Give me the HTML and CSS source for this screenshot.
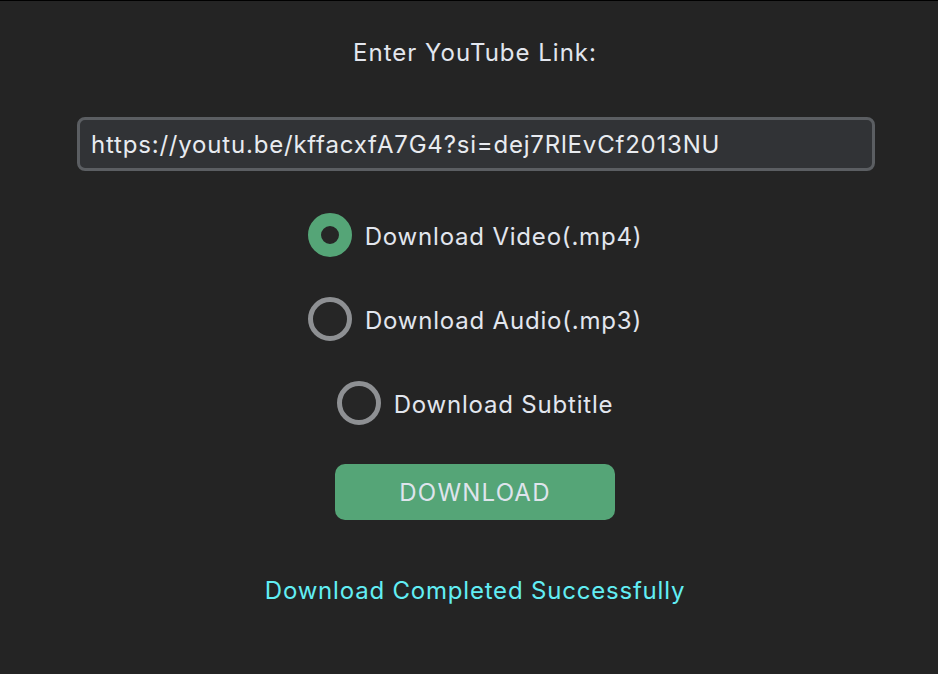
FILE: index.html
```html
<!DOCTYPE html>
<html>
<head>
<meta charset="utf-8">
<link rel="stylesheet" href="styles.css">
</head>
<body>
<main class="app">
  <div class="title">Enter YouTube Link:</div>
  <div class="input">https://youtu.be/kffacxfA7G4?si=dej7RlEvCf2013NU</div>
  <div class="options">
    <label class="radio"><span class="dot checked"></span><span class="label">Download Video(.mp4)</span></label>
    <label class="radio"><span class="dot"></span><span class="label">Download Audio(.mp3)</span></label>
    <label class="radio"><span class="dot"></span><span class="label">Download Subtitle</span></label>
  </div>
  <button class="btn">DOWNLOAD</button>
  <div class="status">Download Completed Successfully</div>
</main>
</body>
</html>
```
FILE: styles.css
```css
html, body {
  margin: 0;
  padding: 0;
  height: 100%;
  background: #242424;
}
body {
  border-top: 1px solid #000;
  box-sizing: border-box;
  font-family: Inter, "Noto Sans", sans-serif;
  color: #e2e6ee;
  letter-spacing: 0.8px;
}
.app {
  display: flex;
  flex-direction: column;
  align-items: center;
  padding-left: 12px;
}
.title {
  margin-top: 38px;
  font-size: 24px;
  line-height: 28px;
  height: 28px;
  letter-spacing: 1px;
}
.input {
  margin-top: 50px;
  width: 798px;
  height: 54px;
  box-sizing: border-box;
  border: 3px solid #5b5e62;
  border-radius: 8px;
  background: #313336;
  padding-left: 11px;
  display: flex;
  align-items: center;
  font-size: 24px;
  color: #e8ebf0;
  margin-left: 2px;
}
.options {
  display: flex;
  flex-direction: column;
  align-items: center;
  gap: 40px;
  margin-top: 42px;
}
.radio {
  display: flex;
  align-items: center;
  height: 44px;
  gap: 13px;
}
.dot {
  width: 44px;
  height: 44px;
  box-sizing: border-box;
  border-radius: 50%;
  border: 5px solid #8e9093;
  background: #262626;
}
.dot.checked {
  border: 13px solid #55a577;
  background: #262626;
}
.label {
  font-size: 24px;
  line-height: 30px;
  padding-top: 3px;
}
.btn {
  margin-top: 39px;
  width: 280px;
  height: 56px;
  border: none;
  border-radius: 10px;
  background: #55a577;
  color: #dfe4ec;
  font-family: Inter, "Noto Sans", sans-serif;
  font-size: 24px;
  letter-spacing: 1.2px;
  padding: 0;
}
.status {
  margin-top: 56px;
  font-size: 24px;
  line-height: 30px;
  color: #62eef4;
}
```
